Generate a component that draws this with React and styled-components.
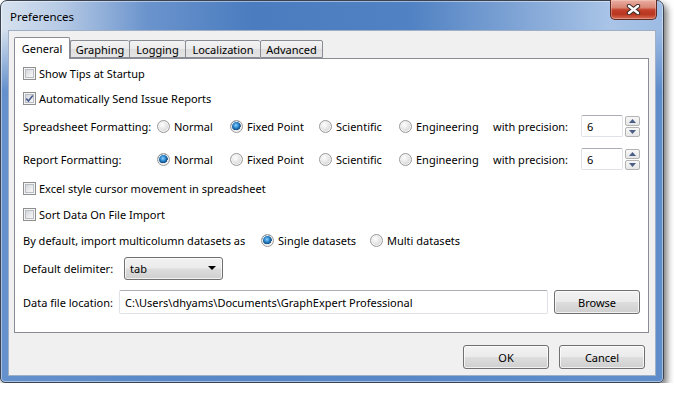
import React from 'react';
import styled, { createGlobalStyle } from 'styled-components';

const GlobalStyle = createGlobalStyle`
  *, *::before, *::after {
    box-sizing: border-box;
  }
  html, body {
    margin: 0;
    padding: 0;
    background: #ffffff;
  }
  body {
    font-family: "Noto Sans", "Open Sans", sans-serif;
    font-size: 11px;
    color: #000;
  }
`;

// Window chrome

const Window = styled.div`
  width: 664px;
  height: 383px;
  border: 1px solid #3b4350;
  border-radius: 7px 7px 5px 5px;
  padding: 0 7px 6px 7px;
  display: flex;
  flex-direction: column;
  background:
    linear-gradient(to bottom, rgba(88, 136, 200, 0) 0px, rgba(88, 136, 200, 0) 28px, rgba(88, 136, 200, 0.9) 90px),
    linear-gradient(90deg, #d7e2ef 0%, #b6cae5 9%, #6b94cd 22%, #4a7cbf 38%, #5182c3 62%, #8badda 82%, #a9c4e7 92%, #9dbbe3 100%);
  box-shadow: 3px 4px 7px rgba(0, 0, 0, 0.55), inset 0 0 0 1px rgba(255, 255, 255, 0.45);
`;

const TitleBar = styled.div`
  height: 29px;
  flex: none;
  margin: 0 -7px;
  padding: 0 6px 0 9px;
  display: flex;
  align-items: flex-start;
  justify-content: space-between;
`;

const Title = styled.span`
  line-height: 31px;
  font-size: 11.5px;
  color: #000;
`;

const CloseButton = styled.div`
  width: 47px;
  height: 20px;
  margin-top: -1px;
  border: 1px solid #5e2a25;
  border-top: none;
  border-radius: 0 0 5px 5px;
  display: flex;
  align-items: center;
  justify-content: center;
  background: linear-gradient(#eab0a3 0%, #d98574 40%, #c3412a 52%, #b8361f 75%, #d86d55 100%);
  box-shadow: inset 0 0 0 1px rgba(255, 220, 210, 0.35);
`;

const Client = styled.div`
  width: 648px;
  height: 346px;
  flex: none;
  border: 1px solid #9fb0c6;
  background: #f0f0f0;
  padding: 6px 6px 0 5px;
  display: flex;
  flex-direction: column;
`;

// Tabs

const TabStrip = styled.div`
  height: 21px;
  flex: none;
  display: flex;
  align-items: flex-end;
  position: relative;
  z-index: 1;
`;

const Tab = styled.div`
  width: ${p => p.$w}px;
  height: ${p => (p.$active ? 22 : 18)}px;
  border: 1px solid #898c95;
  border-bottom: ${p => (p.$active ? 'none' : '1px solid #898c95')};
  border-right: ${p => (p.$active || p.$last ? '1px solid #898c95' : 'none')};
  margin-bottom: ${p => (p.$active ? -1 : 0)}px;
  border-radius: 2px 2px 0 0;
  background: ${p => (p.$active ? '#ffffff' : 'linear-gradient(#f3f3f3, #ebebeb 50%, #dedede 51%, #e5e5e5)')};
  display: flex;
  align-items: center;
  justify-content: center;
  padding-top: ${p => (p.$active ? 0 : 1)}px;
`;

const Panel = styled.div`
  height: 275px;
  flex: none;
  border: 1px solid #898c95;
  background: #ffffff;
  padding: 2px 8px 0 8px;
  display: flex;
  flex-direction: column;
`;

const Row = styled.div`
  height: 24px;
  margin-top: ${p => p.$mt || 0}px;
  display: flex;
  align-items: center;
`;

const GridRow = styled.div`
  height: 24px;
  margin-top: ${p => p.$mt || 0}px;
  display: grid;
  grid-template-columns: 134px 73px 89px 80px 94px 88px auto;
  align-items: center;
`;

const Label = styled.span`
  width: ${p => (p.$w ? `${p.$w}px` : 'auto')};
  flex: none;
  white-space: nowrap;
`;

// Checkbox

const CheckWrap = styled.label`
  display: flex;
  align-items: center;
  gap: 3px;
`;

const CheckBox = styled.span`
  width: 13px;
  height: 13px;
  border: 1px solid #8f8f8f;
  padding: 1px;
  background: #f4f4f4;
  position: relative;
  &::before {
    content: '';
    display: block;
    width: 100%;
    height: 100%;
    border: 1px solid #b9bec6;
    background: linear-gradient(135deg, #d3d6db 0%, #e9eaec 55%, #f9f9f9 100%);
  }
`;

const CheckMark = styled.svg`
  position: absolute;
  left: 1px;
  top: 1px;
`;

function Checkbox({ checked, children }) {
  return (
    <CheckWrap>
      <CheckBox>
        {checked && (
          <CheckMark width="9" height="9" viewBox="0 0 9 9">
            <path d="M1.2 4.6 L3.4 7 L7.8 1.4" fill="none" stroke="#4a5d8f" strokeWidth="1.6" />
          </CheckMark>
        )}
      </CheckBox>
      {children}
    </CheckWrap>
  );
}

// Radio

const RadioWrap = styled.label`
  display: flex;
  align-items: center;
  gap: 4px;
  width: ${p => (p.$w ? `${p.$w}px` : 'auto')};
  white-space: nowrap;
`;

const RadioDot = styled.span`
  width: 13px;
  height: 13px;
  border-radius: 50%;
  border: 1px solid #9a9a9a;
  flex: none;
  background: ${p =>
    p.$on
      ? 'radial-gradient(circle at 45% 40%, #8fd3ff 0%, #2e8ad0 28%, #114a80 52%, #e6e6e6 56%, #f7f7f7 100%)'
      : 'radial-gradient(circle at 40% 35%, #ffffff 0%, #e6e6e6 45%, #c9c9c9 100%)'};
  box-shadow: inset 0 0 0 1px #f4f4f4;
`;

function Radio({ on, w, children }) {
  return (
    <RadioWrap $w={w}>
      <RadioDot $on={on} />
      {children}
    </RadioWrap>
  );
}

// Spinner

const SpinWrap = styled.div`
  display: flex;
  align-items: center;
  gap: 2px;
`;

const TextBox = styled.div`
  width: ${p => p.$w}px;
  height: ${p => p.$h || 22}px;
  flex: none;
  border: 1px solid #dfe3e8;
  border-top-color: #abadb3;
  border-radius: 2px;
  background: #fff;
  padding: 0 5px;
  display: flex;
  align-items: center;
  white-space: nowrap;
  overflow: hidden;
`;

const SpinButtons = styled.div`
  display: flex;
  flex-direction: column;
  gap: 1px;
`;

const SpinButton = styled.div`
  width: 15px;
  height: 10px;
  border: 1px solid #b3b3b3;
  border-radius: 2px;
  background: linear-gradient(#f7f7f7, #e6e6e6);
  display: flex;
  align-items: center;
  justify-content: center;
`;

function Spinner({ value }) {
  return (
    <SpinWrap>
      <TextBox $w={42}>{value}</TextBox>
      <SpinButtons>
        <SpinButton>
          <svg width="7" height="4" viewBox="0 0 7 4">
            <path d="M0 4 L3.5 0 L7 4 Z" fill="#4b5f86" />
          </svg>
        </SpinButton>
        <SpinButton>
          <svg width="7" height="4" viewBox="0 0 7 4">
            <path d="M0 0 L3.5 4 L7 0 Z" fill="#4b5f86" />
          </svg>
        </SpinButton>
      </SpinButtons>
    </SpinWrap>
  );
}

// Buttons & combo

const Button = styled.div`
  width: ${p => p.$w}px;
  height: ${p => p.$h || 24}px;
  border: 1px solid #707070;
  border-radius: 3px;
  background: linear-gradient(#f2f2f2 0%, #ebebeb 48%, #dddddd 52%, #cfcfcf 100%);
  box-shadow: inset 0 0 0 1px rgba(255, 255, 255, 0.7);
  display: flex;
  align-items: center;
  justify-content: ${p => (p.$combo ? 'space-between' : 'center')};
  padding: ${p => (p.$combo ? '0 6px 0 5px' : '0')};
  flex: none;
`;

const Footer = styled.div`
  margin-top: 12px;
  padding-right: 4px;
  display: flex;
  justify-content: flex-end;
  gap: 10px;
`;

const Spacer = styled.div`
  width: ${p => p.$w}px;
  flex: none;
`;

export default function App() {
  return (
    <>
      <GlobalStyle />
      <Window>
        <TitleBar>
          <Title>Preferences</Title>
          <CloseButton>
            <svg width="15" height="11" viewBox="0 0 15 11">
              <path d="M3 2 L12 9 M12 2 L3 9" stroke="#3a2a28" strokeWidth="4.4" strokeLinecap="round" />
              <path d="M3 2 L12 9 M12 2 L3 9" stroke="#ffffff" strokeWidth="2.4" strokeLinecap="round" />
            </svg>
          </CloseButton>
        </TitleBar>
        <Client>
          <TabStrip>
            <Tab $active $w={56}>General</Tab>
            <Tab $w={59}>Graphing</Tab>
            <Tab $w={56}>Logging</Tab>
            <Tab $w={75}>Localization</Tab>
            <Tab $w={63} $last>Advanced</Tab>
          </TabStrip>
          <Panel>
            <Row>
              <Checkbox>Show Tips at Startup</Checkbox>
            </Row>
            <Row $mt={1}>
              <Checkbox checked>Automatically Send Issue Reports</Checkbox>
            </Row>
            <GridRow $mt={4}>
              <Label>Spreadsheet Formatting:</Label>
              <Radio>Normal</Radio>
              <Radio on>Fixed Point</Radio>
              <Radio>Scientific</Radio>
              <Radio>Engineering</Radio>
              <Label>with precision:</Label>
              <Spinner value="6" />
            </GridRow>
            <GridRow $mt={9}>
              <Label>Report Formatting:</Label>
              <Radio on>Normal</Radio>
              <Radio>Fixed Point</Radio>
              <Radio>Scientific</Radio>
              <Radio>Engineering</Radio>
              <Label>with precision:</Label>
              <Spinner value="6" />
            </GridRow>
            <Row $mt={5}>
              <Checkbox>Excel style cursor movement in spreadsheet</Checkbox>
            </Row>
            <Row $mt={2}>
              <Checkbox>Sort Data On File Import</Checkbox>
            </Row>
            <Row $mt={2}>
              <Label $w={238}>By default, import multicolumn datasets as</Label>
              <Radio on w={109}>Single datasets</Radio>
              <Radio>Multi datasets</Radio>
            </Row>
            <Row $mt={4}>
              <Label $w={101}>Default delimiter:</Label>
              <Button $w={99} $h={23} $combo>
                <span>tab</span>
                <svg width="8" height="4" viewBox="0 0 8 4">
                  <path d="M0 0 L8 0 L4 4 Z" fill="#000" />
                </svg>
              </Button>
            </Row>
            <Row $mt={10}>
              <Label $w={96}>Data file location:</Label>
              <TextBox $w={429} $h={24}>C:\Users\dhyams\Documents\GraphExpert Professional</TextBox>
              <Spacer $w={6} />
              <Button $w={86} $h={24}>Browse</Button>
            </Row>
          </Panel>
          <Footer>
            <Button $w={86}>OK</Button>
            <Button $w={86}>Cancel</Button>
          </Footer>
        </Client>
      </Window>
    </>
  );
}
